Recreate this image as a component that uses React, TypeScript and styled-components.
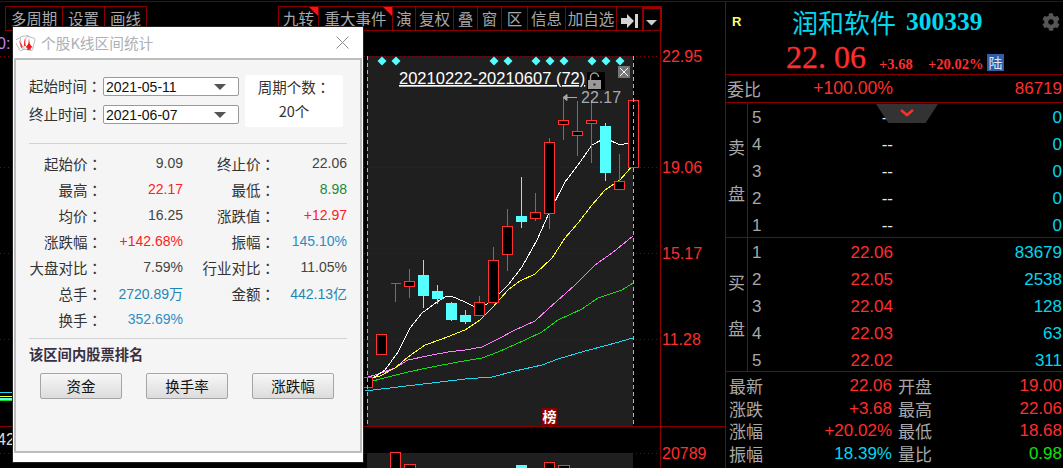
import React from "react";
import styled, { createGlobalStyle } from "styled-components";
import { FaCog } from "react-icons/fa";

const CJK = `"Noto Sans CJK SC", sans-serif`;
const LATIN = `"Liberation Sans", "Noto Sans CJK SC", sans-serif`;
const SERIF = `"Liberation Serif", "Noto Sans CJK SC", serif`;
const RED = "#ff2d2d";
const LINE = "#8a0000";
const CYAN = "#00d8f0";
const GREY = "#a8a8a8";

const Global = createGlobalStyle`
  html, body { margin: 0; padding: 0; background: #000; }
  * { box-sizing: border-box; }
`;

const Frame = styled.div`
  position: relative;
  width: 1063px;
  height: 468px;
  padding-top: 1px;
  background: #000;
  overflow: hidden;
  display: flex;
  font-family: ${LATIN};
`;
const Main = styled.div`
  width: 725px;
  display: flex;
  flex-direction: column;
  border-top: 1px solid #660000;
`;
const Toolbar = styled.div`
  height: 29px;
  padding: 4px 0 0 5px;
  display: flex;
  flex: none;
`;
const ToolGroup = styled.div<{ $gap?: number }>`
  display: flex;
  height: 25px;
  margin-left: ${(p) => p.$gap ?? 0}px;
  border: 1px solid ${LINE};
  border-right: 0;
`;
const ToolButton = styled.div<{ $w: number; $flag?: boolean; $hot?: boolean }>`
  position: relative;
  width: ${(p) => p.$w}px;
  border-right: ${(p) => (p.$hot ? 2 : 1)}px solid ${(p) => (p.$hot ? "#a00000" : LINE)};
  ${(p) => (p.$hot ? "border-top: 2px solid #a00000; border-left: 1px solid #a00000;" : "")}
  color: ${GREY};
  font: 15.5px/23px ${CJK};
  text-align: center;
  white-space: nowrap;
  overflow: hidden;
  &::after {
    content: "";
    display: ${(p) => (p.$flag ? "block" : "none")};
    position: absolute;
    right: 0;
    top: 0;
    border-style: solid;
    border-width: 0 9px 9px 0;
    border-color: transparent #ff1010 transparent transparent;
  }
`;
const ChartWrap = styled.div`
  flex: 1;
  position: relative;
`;
const ChartSvg = styled.svg`
  display: block;
  width: 725px;
  height: 437px;
`;
const AxisText = styled.text`
  font: 16px ${LATIN};
  fill: ${RED};
`;
const RangeText = styled.text`
  font: 16.5px ${LATIN};
  fill: #fff;
  text-decoration: underline;
`;
const HighText = styled.text`
  font: 16px ${LATIN};
  fill: #a4aab0;
`;
const BangText = styled.text`
  font: bold 14px ${CJK};
  fill: #fff;
`;

/* ---------- dialog ---------- */
const Dialog = styled.div`
  position: absolute;
  left: 12px;
  top: 26px;
  width: 352px;
  height: 437px;
  background: #fff;
  border: 1px solid #222;
  padding: 0 1px 9px;
  display: flex;
  flex-direction: column;
  z-index: 2;
`;
const TitleBar = styled.div`
  height: 31px;
  flex: none;
  display: flex;
  align-items: center;
  padding: 0 13px 0 2px;
  gap: 5px;
`;
const Title = styled.div`
  flex: 1;
  color: #adb0b4;
  font: 14.7px ${CJK};
`;
const Inner = styled.div`
  flex: 1;
  background: #f5f5f5;
  border: 2px solid #bdbdbd;
  padding: 15px 13px 0 13px;
  display: flex;
  flex-direction: column;
`;
const TopForm = styled.div`
  display: flex;
  height: 69px;
  border-bottom: 1px solid #d2d2d2;
`;
const DateCol = styled.div`
  width: 216px;
  display: flex;
  flex-direction: column;
  gap: 9px;
  padding-top: 2px;
`;
const DateRow = styled.div`
  display: flex;
  align-items: center;
  height: 19px;
`;
const DateLabel = styled.div`
  width: 74px;
  margin-top: -2px;
  color: #333;
  font: 14.5px ${CJK};
  white-space: nowrap;
`;
const Colon = styled.span`
  font-family: "Noto Sans CJK TC", sans-serif;
`;
const DateField = styled.div`
  position: relative;
  width: 136px;
  height: 19px;
  background: #fff;
  border: 1px solid #9a9a9a;
  border-radius: 2px;
  color: #111;
  font: 14px/18px ${LATIN};
  padding-left: 2px;
  &::after {
    content: "";
    position: absolute;
    right: 12px;
    top: 6px;
    border-style: solid;
    border-width: 6px 6px 0 6px;
    border-color: #555 transparent transparent transparent;
  }
`;
const CountBox = styled.div`
  width: 98px;
  height: 52px;
  background: #fff;
  border-radius: 3px;
  color: #333;
  font: 14.5px/24px ${CJK};
  text-align: center;
`;
const Stats = styled.div`
  display: grid;
  grid-template-columns: 73px 81px 92px 72px;
  grid-auto-rows: 26px;
  padding-top: 6px;
  height: 195px;
  border-bottom: 1px solid #d2d2d2;
  align-items: center;
`;
const StatLabel = styled.div`
  color: #333;
  font: 14.5px ${CJK};
  text-align: right;
  white-space: nowrap;
`;
const StatValue = styled.div<{ $c?: string }>`
  color: ${(p) => p.$c ?? "#444"};
  font: 14px ${LATIN};
  text-align: right;
  white-space: nowrap;
`;
const RankTitle = styled.div`
  color: #3a3040;
  font: bold 14.3px/30px ${CJK};
`;
const RankButtons = styled.div`
  display: flex;
  gap: 24px;
  padding: 4px 0 0 11px;
`;
const RankButton = styled.div`
  width: 82px;
  height: 26px;
  background: linear-gradient(#f7f7f7, #dcdcdc);
  border: 1px solid #a5a5a5;
  border-radius: 2px;
  color: #111;
  font: 14.5px/24px ${CJK};
  text-align: center;
`;

/* ---------- right side ---------- */
const Side = styled.div`
  position: relative;
  width: 338px;
  display: flex;
  flex-direction: column;
  border-top: 1px solid #660000;
  border-left: 1px solid ${LINE};
`;
const Head = styled.div`
  height: 73px;
  flex: none;
  border-bottom: 1px solid ${LINE};
  display: flex;
  flex-direction: column;
`;
const NameRow = styled.div`
  height: 39px;
  display: flex;
  align-items: center;
  padding: 0 2px 0 6px;
  color: ${CYAN};
`;
const RBadge = styled.div`
  width: 60px;
  color: #ffff70;
  font: bold 13px ${LATIN};
`;
const Name = styled.div`
  font: 26px/39px ${CJK};
  width: 114px;
  white-space: nowrap;
`;
const Code = styled.div`
  flex: 1;
  font: bold 25.500px/39px ${SERIF};
`;
const Gear = styled(FaCog)`
  width: 18px;
  height: 18px;
  color: #555;
  margin-right: 1px;
`;
const PriceRow = styled.div`
  display: flex;
  align-items: baseline;
  padding-left: 60px;
  color: ${RED};
`;
const BigPrice = styled.div`
  font: 32px/32px ${SERIF};
  width: 93px;
  white-space: pre;
  -webkit-text-stroke: 0.3px ${RED};
`;
const Delta = styled.div<{ $w: number }>`
  font: bold 14.500px ${SERIF};
  width: ${(p) => p.$w}px;
  position: relative;
  top: 1px;
`;
const Lu = styled.div`
  width: 17px;
  height: 17px;
  background: #2f5ea8;
  color: #dfe6f2;
  font: 14px/17px ${CJK};
  text-align: center;
`;
const RatioRow = styled.div`
  height: 28px;
  flex: none;
  display: grid;
  grid-template-columns: 166px 1fr;
  align-items: center;
  padding: 0 0 0 1px;
  border-bottom: 1px solid ${LINE};
`;
const Ratio = styled.div`
  display: flex;
  justify-content: space-between;
  align-items: center;
  color: ${GREY};
  font: 17px ${CJK};
`;
const RedNum = styled.span`
  color: ${RED};
  font: 17.600px ${LATIN};
`;
const RightNum = styled.div<{ $c?: string }>`
  color: ${(p) => p.$c ?? RED};
  font: 17px ${LATIN};
  text-align: right;
  padding-right: 1px;
`;
const Book = styled.div<{ $h: number }>`
  height: ${(p) => p.$h}px;
  flex: none;
  display: flex;
  border-bottom: 1px solid ${LINE};
`;
const BookSide = styled.div`
  width: 22px;
  flex: none;
  border-right: 1px solid ${LINE};
  color: ${GREY};
  font: 17px/46px ${CJK};
  text-align: center;
  display: flex;
  flex-direction: column;
  justify-content: center;
`;
const BookRows = styled.div<{ $top: number }>`
  flex: 1;
  min-width: 0;
  display: flex;
  flex-direction: column;
  padding-top: ${(p) => p.$top}px;
`;
const BookRow = styled.div`
  display: grid;
  grid-template-columns: 20px 121px 1fr;
  padding-left: 4px;
  align-items: center;
  height: 27px;
  flex: none;
  font: 17px ${LATIN};
`;
const Level = styled.div`
  color: ${GREY};
`;
const BookPrice = styled.div<{ $dash?: boolean }>`
  color: ${(p) => (p.$dash ? "#e8e8e8" : RED)};
  text-align: right;
`;
const Summary = styled.div`
  flex: 1;
  display: grid;
  grid-template-columns: 164px 1fr;
  grid-auto-rows: 22.5px;
  padding: 3px 0 0 3px;
  align-items: center;
`;
const SumCell = styled.div<{ $inset?: number }>`
  display: flex;
  justify-content: space-between;
  align-items: center;
  height: 22px;
  padding-left: ${(p) => p.$inset ?? 0}px;
  color: ${GREY};
  font: 17px/22px ${CJK};
  white-space: nowrap;
`;
const SumValue = styled.span<{ $c?: string }>`
  color: ${(p) => p.$c ?? RED};
  font: 17px/22px ${LATIN};
  padding-right: 1px;
`;
const Tab = styled.div`
  position: absolute;
  left: 150px;
  top: 102px;
  width: 62px;
  height: 19px;
  background: #333;
  clip-path: polygon(0 0, 100% 0, 80% 100%, 20% 100%);
  display: flex;
  justify-content: center;
  padding-top: 5px;
`;

/* ---------- data ---------- */
type C = { x: number; hi?: number; lo?: number; t: number; b: number; up: boolean };
const candles: C[] = [
  { x: 633.5, t: 100, b: 167, up: true },
  { x: 619.5, hi: 154, lo: 189, t: 181, b: 189, up: true },
  { x: 605.5, hi: 123, lo: 181, t: 126, b: 173, up: false },
  { x: 591.5, hi: 100, lo: 163, t: 120, b: 123, up: true },
  { x: 577.5, hi: 101, lo: 156, t: 131, b: 135, up: true },
  { x: 563.5, hi: 97, lo: 140, t: 120, b: 124, up: true },
  { x: 549.5, hi: 138, lo: 229, t: 142, b: 213, up: true },
  { x: 535.5, hi: 193, lo: 221, t: 212, b: 218, up: true },
  { x: 521.5, hi: 177, lo: 228, t: 216, b: 222, up: false },
  { x: 507.5, hi: 209, lo: 271, t: 226, b: 254, up: true },
  { x: 493.5, hi: 247, lo: 302, t: 260, b: 302, up: true },
  { x: 479.5, hi: 296, lo: 315, t: 302, b: 315, up: true },
  { x: 465.5, hi: 310, lo: 324, t: 315, b: 322, up: false },
  { x: 451.5, hi: 302, lo: 321, t: 303, b: 320, up: false },
  { x: 437.5, hi: 285, lo: 304, t: 291, b: 299, up: false },
  { x: 423.5, hi: 260, lo: 308, t: 275, b: 296, up: false },
  { x: 409.5, hi: 269, lo: 298, t: 281, b: 286, up: true },
  { x: 395.5, hi: 283, lo: 302, t: 283, b: 283, up: true },
  { x: 381.5, t: 334, b: 354, up: true },
  { x: 367.5, t: 377, b: 387, up: true },
];
const ma: { c: string; p: string }[] = [
  { c: "#1fd8f0", p: "365,391 398,387 432,383 465,379 492,377 515,371 542,365 558,359 585,351 608,345 633,338" },
  { c: "#10e010", p: "365,383 388,377 408,372 432,367 458,362 482,358 498,352 525,340 542,332 558,320 582,309 598,298 622,290 633,283" },
  { c: "#ff80ff", p: "365,378 378,374 395,368 408,360 432,355 448,352 465,350 482,347 498,339 515,330 535,321 548,309 575,285 595,265 612,253 633,236" },
  { c: "#ffff30", p: "365,380 380,376 395,368 408,357 425,345 442,339 465,330 480,320 492,308 508,290 520,281 535,274 552,258 565,238 578,223 592,205 605,190 620,180 633,165" },
  { c: "#ffffff", p: "367,382 385,370 398,352 410,328 422,313 437,302 445,297 451,296 465,302 479,309 493,300 508,285 522,267 537,240 549,213 565,182 578,165 592,145 605,138 620,145 633,142" },
];
const diamonds = [382, 396, 494, 508, 536, 550, 564, 592, 606, 620];
const lower = [
  { x: 390, y: 452, w: 10 },
  { x: 404, y: 464, w: 11 },
  { x: 544, y: 462, w: 10 },
  { x: 558, y: 465, w: 11 },
];
const axis = [
  { y: 56, t: "22.95" },
  { y: 167, t: "19.06" },
  { y: 253, t: "15.17" },
  { y: 339, t: "11.28" },
  { y: 453, t: "20789" },
];
const tools: { t?: string; w: number; flag?: boolean; hot?: boolean; icon?: "arrow" | "down" }[] = [
  { t: "九转", w: 40, flag: true },
  { t: "重大事件", w: 74, flag: true },
  { t: "演", w: 23 },
  { t: "复权", w: 38 },
  { t: "叠", w: 24 },
  { t: "窗", w: 24 },
  { t: "区", w: 26 },
  { t: "信息", w: 38 },
  { t: "加自选", w: 51 },
  { w: 26, icon: "arrow" },
  { w: 19, hot: true, icon: "down" },
];
const stats: [string, string, string?, string?, string?, string?][] = [
  ["起始价", "9.09", undefined, "终止价", "22.06", undefined],
  ["最高", "22.17", "#ff2020", "最低", "8.98", "#1c8a3a"],
  ["均价", "16.25", undefined, "涨跌值", "+12.97", "#ff2020"],
  ["涨跌幅", "+142.68%", "#ff2020", "振幅", "145.10%", "#2a8fc4"],
  ["大盘对比", "7.59%", undefined, "行业对比", "11.05%", undefined],
  ["总手", "2720.89万", "#1f85b5", "金额", "442.13亿", "#1f85b5"],
  ["换手", "352.69%", "#2a8fc4"],
];
const sell = [5, 4, 3, 2, 1];
const buy: [number, string, string][] = [
  [1, "22.06", "83679"],
  [2, "22.05", "2538"],
  [3, "22.04", "128"],
  [4, "22.03", "63"],
  [5, "22.02", "311"],
];
const summary: [string, string, string?, string?, string?, string?][] = [
  ["最新", "22.06", undefined, "开盘", "19.00", undefined],
  ["涨跌", "+3.68", undefined, "最高", "22.06", undefined],
  ["涨幅", "+20.02%", undefined, "最低", "18.68", undefined],
  ["振幅", "18.39%", CYAN, "量比", "0.98", "#10e010"],
];

const CardsLogo = () => (
  <svg width="20" height="20" viewBox="0 0 20 20">
    <g stroke="#999" strokeWidth="0.6" fill="#fff">
      <rect x="1" y="5" width="9" height="12" rx="1.5" transform="rotate(-28 5 11)" />
      <rect x="5" y="3" width="9" height="13" rx="1.5" transform="rotate(-8 9 10)" />
      <rect x="9" y="4" width="9" height="13" rx="1.5" transform="rotate(14 13 10)" />
    </g>
    <path d="M3 7l4 7-2 1zM8 5l2 8H8zM13 5l1 7-2 1z" fill="#e33" />
    <path d="M13 10l3.5 4.5-2 .3.5 2h-4l.5-2-2-.3z" fill="#e11" />
  </svg>
);
const CloseX = () => (
  <svg width="13" height="13" viewBox="0 0 13 13">
    <path d="M.5.5l12 12M12.5.5l-12 12" stroke="#8c8c8c" strokeWidth="1" fill="none" />
  </svg>
);
const IconSvg = styled.svg`
  vertical-align: middle;
`;
const ToolIcon = ({ kind }: { kind: "arrow" | "down" }) =>
  kind === "arrow" ? (
    <IconSvg width="17" height="14" viewBox="0 0 17 14">
      <path d="M0 4h6V0l7 7-7 7v-4H0z" fill="#d4d4d4" />
      <rect x="14" y="0" width="3" height="14" fill="#d4d4d4" />
    </IconSvg>
  ) : (
    <IconSvg width="12" height="7" viewBox="0 0 12 7">
      <path d="M0 1h11L5.500 6.500z" fill="#ccc" />
    </IconSvg>
  );

const Chart = () => (
  <ChartSvg viewBox="0 31 725 437">
    <rect x="367" y="56" width="266" height="370" fill="#1f1f1f" />
    <rect x="367" y="453" width="266" height="15" fill="#1f1f1f" />
    {axis.map((a) => (
      <g key={a.t}>
        <line x1="0" x2="660" y1={a.y + 0.5} y2={a.y + 0.5} stroke="#8a0000" strokeDasharray="1 3" />
        <AxisText x="662" y={a.y + 6}>{a.t}</AxisText>
      </g>
    ))}
    <g shapeRendering="crispEdges">
      {ma.map((m) => (
        <polyline key={m.c} points={m.p} fill="none" stroke={m.c} strokeWidth="1" />
      ))}
      {candles.map((c) => {
        const col = c.up ? "#ff3232" : "#54ffff";
        return (
          <g key={c.x}>
            {c.hi !== undefined && <line x1={c.x} x2={c.x} y1={c.hi} y2={c.lo} stroke={col} />}
            {c.t === c.b ? (
              <line x1={c.x - 5} x2={c.x + 5} y1={c.t + 0.5} y2={c.t + 0.5} stroke={col} />
            ) : c.up ? (
              <rect x={c.x - 5} y={c.t + 0.5} width="10" height={c.b - c.t} fill="#000" stroke={col} />
            ) : (
              <rect x={c.x - 5.5} y={c.t} width="11" height={c.b - c.t} fill={col} />
            )}
          </g>
        );
      })}
      <line x1="367.500" x2="367.500" y1="56" y2="426" stroke="#f0b020" strokeDasharray="4 3" />
      <line x1="633.500" x2="633.500" y1="56" y2="426" stroke="#f0b020" strokeDasharray="4 3" />
    </g>
    {diamonds.map((x) => (
      <path key={x} d={`M${x} 56.500l4.500 4.500-4.500 4.500-4.500-4.500z`} fill="#54ffff" />
    ))}
    <RangeText x="399" y="84">20210222-20210607 (72)</RangeText>
    <rect x="587" y="72" width="18" height="18" fill="#000" />
    <rect x="588" y="80" width="13" height="9" fill="#9a9a9a" />
    <path d="M590.500 80v-3a4 4 0 0 1 8 0" fill="none" stroke="#9a9a9a" strokeWidth="1.500" />
    <rect x="593.500" y="83.500" width="2" height="2" fill="#222" />
    <rect x="618" y="66" width="12" height="12" fill="#777" />
    <path d="M620 68l8 8M628 68l-8 8" stroke="#fff" />
    <path d="M563 97.500h14M563 97.500l4-3v6z" stroke="#a8a8a8" fill="#a8a8a8" />
    <HighText x="581" y="103">22.17</HighText>
    <rect x="542" y="408" width="15" height="17" fill="#8a0000" />
    <BangText x="542.500" y="422">榜</BangText>
    <line x1="0" x2="725" y1="426.500" y2="426.500" stroke="#8a0000" />
    <line x1="660.500" x2="660.500" y1="31" y2="468" stroke="#8a0000" />
    {lower.map((l) => (
      <rect key={l.x} x={l.x + 0.5} y={l.y + 0.5} width={l.w} height="30" fill="#000" stroke="#ff3232" />
    ))}
    <rect x="516" y="465" width="11" height="6" fill="#54ffff" />
    <rect x="0" y="392" width="12" height="1" fill="#1fd8f0" />
    <rect x="0" y="396" width="12" height="1" fill="#ffff30" />
    <rect x="0" y="398" width="12" height="2" fill="#54ffff" />
    <rect x="0" y="400" width="12" height="1" fill="#10e010" />
    <AxisText x="-3" y="445" style={{ fill: "#ddd" }}>42</AxisText>
    <AxisText x="-3" y="49" style={{ fill: "#c080ff" }}>0:</AxisText>
  </ChartSvg>
);

export default function App() {
  return (
    <Frame>
      <Global />
      <Main>
        <Toolbar>
          <ToolGroup>
            <ToolButton $w={57}>多周期</ToolButton>
            <ToolButton $w={42}>设置</ToolButton>
            <ToolButton $w={42}>画线</ToolButton>
          </ToolGroup>
          <ToolGroup $gap={131}>
            {tools.map((b, i) => (
              <ToolButton key={i} $w={b.w} $flag={b.flag} $hot={b.hot}>
                {b.t}
                {b.icon && <ToolIcon kind={b.icon} />}
              </ToolButton>
            ))}
          </ToolGroup>
        </Toolbar>
        <ChartWrap>
          <Chart />
        </ChartWrap>
      </Main>

      <Dialog>
        <TitleBar>
          <CardsLogo />
          <Title>个股K线区间统计</Title>
          <CloseX />
        </TitleBar>
        <Inner>
          <TopForm>
            <DateCol>
              <DateRow>
                <DateLabel>起始时间<Colon>：</Colon></DateLabel>
                <DateField>2021-05-11</DateField>
              </DateRow>
              <DateRow>
                <DateLabel>终止时间<Colon>：</Colon></DateLabel>
                <DateField>2021-06-07</DateField>
              </DateRow>
            </DateCol>
            <CountBox>
              周期个数<Colon>：</Colon>
              <br />
              20个
            </CountBox>
          </TopForm>
          <Stats>
            {stats.map((r) => (
              <React.Fragment key={r[0]}>
                <StatLabel>{r[0]}<Colon>：</Colon></StatLabel>
                <StatValue $c={r[2]}>{r[1]}</StatValue>
                {r[3] ? <StatLabel>{r[3]}<Colon>：</Colon></StatLabel> : <span />}
                {r[3] ? <StatValue $c={r[5]}>{r[4]}</StatValue> : <span />}
              </React.Fragment>
            ))}
          </Stats>
          <RankTitle>该区间内股票排名</RankTitle>
          <RankButtons>
            <RankButton>资金</RankButton>
            <RankButton>换手率</RankButton>
            <RankButton>涨跌幅</RankButton>
          </RankButtons>
        </Inner>
      </Dialog>

      <Side>
        <Head>
          <NameRow>
            <RBadge>R</RBadge>
            <Name>润和软件</Name>
            <Code>300339</Code>
            <Gear />
          </NameRow>
          <PriceRow>
            <BigPrice>22. 06</BigPrice>
            <Delta $w={49}>+3.68</Delta>
            <Delta $w={59}>+20.02%</Delta>
            <Lu>陆</Lu>
          </PriceRow>
        </Head>
        <RatioRow>
          <Ratio>委比<RedNum>+100.00%</RedNum></Ratio>
          <RightNum>86719</RightNum>
        </RatioRow>
        <Book $h={135}>
          <BookSide><span>卖</span><span>盘</span></BookSide>
          <BookRows $top={1}>
            {sell.map((n) => (
              <BookRow key={n}>
                <Level>{n}</Level>
                <BookPrice $dash>--</BookPrice>
                <RightNum $c={CYAN}>0</RightNum>
              </BookRow>
            ))}
          </BookRows>
        </Book>
        <Book $h={134}>
          <BookSide><span>买</span><span>盘</span></BookSide>
          <BookRows $top={1}>
            {buy.map(([n, p, v]) => (
              <BookRow key={n}>
                <Level>{n}</Level>
                <BookPrice>{p}</BookPrice>
                <RightNum $c={CYAN}>{v}</RightNum>
              </BookRow>
            ))}
          </BookRows>
        </Book>
        <Summary>
          {summary.map((r) => (
            <React.Fragment key={r[0]}>
              <SumCell>{r[0]}<SumValue $c={r[2]}>{r[1]}</SumValue></SumCell>
              <SumCell $inset={5}>{r[3]}<SumValue $c={r[5]}>{r[4]}</SumValue></SumCell>
            </React.Fragment>
          ))}
        </Summary>
        <Tab>
          <svg width="14" height="8" viewBox="0 0 14 8">
            <path d="M1 1l6 5 6-5" stroke={RED} strokeWidth="2.500" fill="none" />
          </svg>
        </Tab>
      </Side>
    </Frame>
  );
}
